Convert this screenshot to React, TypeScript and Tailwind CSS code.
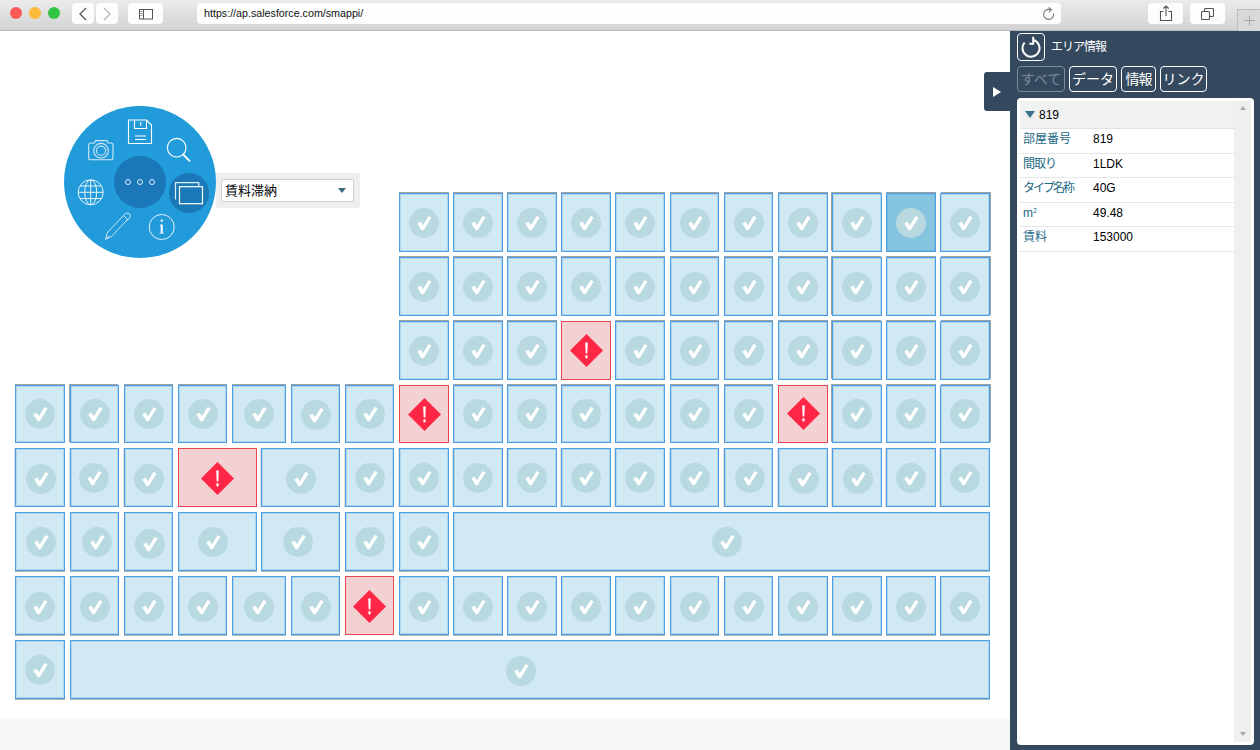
import React from "react";

const CJK = "font-['Liberation_Sans','Noto_Sans_CJK_JP',sans-serif]";

function Check() {
  return (
    <svg width="30" height="30" viewBox="0 0 30 30">
      <circle cx="15" cy="15" r="15" fill="#b9d9e0" />
      <path d="M8.3 15.6 L11.4 13.6 L13.9 17.2 L19.6 7.9 L22.6 9.6 L14.6 22.3 L12.6 22.3 Z" fill="#fff" />
    </svg>
  );
}

function Warn() {
  return (
    <svg width="33" height="33" viewBox="0 0 33 33">
      <path d="M16.5 0 L33 16.5 L16.5 33 L0 16.5 Z" fill="#ff2745" />
      <path d="M15.2 8.5 H17.8 L17.3 19.5 H15.7 Z" fill="#fff" />
      <rect x="15.4" y="21.3" width="2.2" height="3" fill="#fff" />
    </svg>
  );
}

type Cell = { r: number; c: number; s?: number; w?: boolean };

const run = (r: number, from: number, warn: number[] = []): Cell[] => {
  const out: Cell[] = [];
  for (let c = from; c <= 19; c++) out.push({ r, c, w: warn.includes(c) });
  return out;
};

const cells: Cell[] = [
  ...run(1, 9),
  ...run(2, 9),
  ...run(3, 9, [12]),
  { r: 4, c: 1 }, { r: 4, c: 2 }, { r: 4, c: 3 }, { r: 4, c: 4 }, { r: 4, c: 5, s: 2 }, { r: 4, c: 7 }, { r: 4, c: 8 },
  ...run(4, 9, [9, 16]),
  { r: 5, c: 1 }, { r: 5, c: 2 }, { r: 5, c: 3 }, { r: 5, c: 4, s: 2, w: true }, { r: 5, c: 6, s: 2 }, { r: 5, c: 8 },
  ...run(5, 9),
  { r: 6, c: 1 }, { r: 6, c: 2 }, { r: 6, c: 3 }, { r: 6, c: 4, s: 2 }, { r: 6, c: 6, s: 2 }, { r: 6, c: 8 }, { r: 6, c: 9 }, { r: 6, c: 10, s: 10 },
  { r: 7, c: 1 }, { r: 7, c: 2 }, { r: 7, c: 3 }, { r: 7, c: 4 }, { r: 7, c: 5, s: 2 }, { r: 7, c: 7 }, { r: 7, c: 8, w: true },
  ...run(7, 9),
  { r: 8, c: 1 }, { r: 8, c: 2, s: 18 },
];

// Tracks whose cell stops one pixel short of the column edge.
const LOOSE = [1, 2, 3, 4, 6, 7, 8, 13, 14, 15];

const NUDGE: Record<string, string> = {
  "4-7": "translate-y-px",
  "4-16": "-translate-y-px",
  "5-1": "translate-x-px translate-y-px",
  "5-2": "-translate-x-px",
  "5-3": "translate-y-px",
  "5-4": "translate-y-px",
  "5-6": "translate-y-px",
  "5-15": "translate-x-px",
  "5-16": "translate-x-px translate-y-px",
  "5-17": "translate-x-px translate-y-px",
  "6-1": "translate-x-px",
  "6-2": "translate-x-[2px]",
  "6-3": "translate-x-px translate-y-[2px]",
  "6-4": "-translate-x-[5px]",
  "6-6": "-translate-x-[3px]",
  "6-10": "translate-x-[5px]",
  "8-2": "-translate-x-[9px] translate-y-px",
};

function edge(cell: Cell): string {
  const last = cell.c + (cell.s ?? 1) - 1;
  if (cell.r <= 4) {
    if (cell.c === 17 || cell.c === 2) return "shadow-[-1px_-1px_0_#a0a0a0,inset_0_0_0_1px_rgba(74,156,224,0.25)]";
    if (last === 19) return "shadow-[1px_-1px_0_#a0a0a0,inset_0_0_0_1px_rgba(74,156,224,0.25)]";
    return "shadow-[0_-1px_0_#a0a0a0,inset_0_0_0_1px_rgba(74,156,224,0.25)]";
  }
  if (cell.r === 5) return "shadow-[-1px_0_0_#e0e0e0,inset_0_0_0_1px_rgba(74,156,224,0.25)]";
  return "shadow-[0_1px_0_#b5b5b5,inset_0_0_0_1px_rgba(74,156,224,0.25)]";
}

function Grid() {
  return (
    <div className="grid grid-cols-[51px_50px_50px_50px_25px_26px_50px_50px_50px_50px_50px_50px_51px_50px_50px_50px_50px_50px_50px] grid-rows-[59px_59px_59px_58px_59px_59px_59px_59px] gap-x-[4px] gap-y-[5px] w-[975px]">
      {cells.map((cell) => {
        const last = cell.c + (cell.s ?? 1) - 1;
        const hi = cell.r === 1 && cell.c === 18;
        const base = cell.w
          ? "bg-[#f3d0d2] border-[#e8484f]"
          : hi
            ? "bg-[#86c5e0] border-[#4a9fe6]"
            : "bg-[#d0e9f3] border-[#4a9fe6]";
        const key = `${cell.r}-${cell.c}`;
        const nudge = NUDGE[key] ?? (cell.r === 7 ? "translate-y-px" : "");
        return (
          <div
            key={key}
            style={{ gridRow: cell.r, gridColumn: `${cell.c} / span ${cell.s ?? 1}` }}
            className={`flex items-center justify-center border ${base} ${cell.w ? "" : edge(cell)} ${LOOSE.includes(last) ? "mr-px" : ""}`}
          >
            <div className={nudge}>{cell.w ? <Warn /> : <Check />}</div>
          </div>
        );
      })}
    </div>
  );
}

function Menu() {
  const s = { fill: "none", stroke: "#fff", strokeWidth: 1.2 };
  return (
    <div className="absolute left-[64px] top-[75px] flex items-center">
      <div className="relative w-[152px] h-[152px] rounded-full bg-[#229bda]">
        <div className="absolute left-[50px] top-[50px] w-[52px] h-[52px] rounded-full bg-[#1b78b8] flex items-center justify-center gap-[6px]">
          <span className="w-[6px] h-[6px] rounded-full border border-[#dcecf6]" />
          <span className="w-[6px] h-[6px] rounded-full border border-[#dcecf6]" />
          <span className="w-[6px] h-[6px] rounded-full border border-[#dcecf6]" />
        </div>
        <div className="absolute left-[105px] top-[67px] w-[40px] h-[40px] rounded-full bg-[#1b78b8]" />
        <svg className="absolute inset-0" width="152" height="152" viewBox="0 0 152 152">
          {/* floppy */}
          <g {...s} strokeWidth={1.1}>
            <path d="M64.5 14 H82.5 L87.5 19 V37.5 H64.5 Z" />
            <path d="M70.5 14 V22.5 H82.5 V14" />
            <path d="M76.7 16 V19.7" />
            <path d="M71 30 H82 M71 33.5 H82" />
          </g>
          {/* search */}
          <g {...s} strokeWidth={1.1}>
            <circle cx="112.7" cy="41.7" r="9.3" />
            <path d="M118.7 48 L126 55.3" strokeWidth={1.8} />
          </g>
          {/* camera */}
          <g {...s} stroke="#cfe7f5" strokeWidth={1.1}>
            <path d="M24.7 39 Q24.7 37 27 37 H30.5 L31.5 34.6 H43 L44 37 H47 Q49 37 49 39 V52 Q49 53.8 47 53.8 H27 Q24.7 53.8 24.7 52 Z" />
            <circle cx="37" cy="44.7" r="7.3" />
            <circle cx="37" cy="44.7" r="4.6" />
          </g>
          {/* globe */}
          <g {...s} stroke="#e6f3fa" strokeWidth={1}>
            <circle cx="26.7" cy="86.3" r="12.5" />
            <ellipse cx="26.7" cy="86.3" rx="6" ry="12.5" />
            <path d="M26.7 73.8 V98.8 M14.2 86.3 H39.2 M16 80 H37.4 M16 92.6 H37.4" />
          </g>
          {/* pencil */}
          <g {...s} stroke="#dcecf6" strokeWidth={0.9}>
            <path d="M41.7 133.3 L43 127 L59.5 109.5 L63.5 113.5 L47.5 130.5 Z" />
            <path d="M57.5 111.5 L61.5 107.5 Q63 106.5 65 107.5 L66 109 Q66.7 110.5 65.5 112 L62 115.5" />
            <path d="M41.7 133.3 L45.5 129.5" />
          </g>
          {/* info */}
          <circle cx="97.7" cy="121" r="12.5" {...s} stroke="#e6f3fa" strokeWidth={1} />
          <path d="M96.8 113.5h1.9v2.2h-1.9z M96 118.6h2.7v8.2h1.1v0.8h-4.2v-0.8h1.1v-7.4h-0.7z" fill="#fff" />
          {/* windows */}
          <g {...s} strokeWidth={1.2}>
            <path d="M111.5 93.5 V76.7 H134.8 V80.7" stroke="#dcecf6" />
            <rect x="115.5" y="80.7" width="23" height="17" fill="#1b78b8" />
          </g>
        </svg>
      </div>
      <div className="mt-[17px] w-[144px] h-[35px] bg-[#eeeeee] rounded-r-[2px] flex items-center pl-[5px]">
        <div className={`w-[133px] h-[23px] bg-white border border-[#ccd0d2] rounded-[2px] flex items-center justify-between pl-[3px] pr-[7px] ${CJK} text-[13px] text-black`}>
          <span>賃料滞納</span>
          <span className="w-0 h-0 border-l-[4.5px] border-r-[4.5px] border-t-[5px] border-l-transparent border-r-transparent border-t-[#3a6680]" />
        </div>
      </div>
    </div>
  );
}

function Chrome() {
  const btn = "bg-[#fdfdfd] rounded-[4px] flex items-center";
  return (
    <div className="h-[31px] flex items-start bg-gradient-to-b from-[#ebebeb] to-[#d3d3d3] border-b border-[#b9b9b9] relative">
      <div className="flex items-center gap-[7px] ml-[10px] mt-[7px]">
        <span className="w-[12px] h-[12px] rounded-full bg-[#fc5b57]" />
        <span className="w-[12px] h-[12px] rounded-full bg-[#fdb93a]" />
        <span className="w-[12px] h-[12px] rounded-full bg-[#30c544]" />
      </div>
      <div className="flex gap-[2px] ml-[12px] mt-[3px]">
        <div className={`${btn} justify-center w-[22px] h-[21px]`}>
          <svg width="12" height="14" viewBox="0 0 12 14"><path d="M9 1 L3 7 L9 13" fill="none" stroke="#555" strokeWidth="1.3" /></svg>
        </div>
        <div className={`${btn} justify-center w-[22px] h-[21px]`}>
          <svg width="12" height="14" viewBox="0 0 12 14"><path d="M3 1 L9 7 L3 13" fill="none" stroke="#b5b5b5" strokeWidth="1.3" /></svg>
        </div>
      </div>
      <div className={`${btn} justify-center w-[35px] h-[21px] ml-[10px] mt-[3px]`}>
        <svg width="14" height="12" viewBox="0 0 14 12">
          <rect x="0.5" y="1.5" width="13" height="9.5" fill="none" stroke="#555" />
          <path d="M4.5 1.5 V11" stroke="#555" />
          <path d="M1.5 3.5H3.5M1.5 5.5H3.5M1.5 7.5H3.5" stroke="#888" />
        </svg>
      </div>
      <div className={`${btn} justify-between w-[864px] h-[21px] ml-[34px] mt-[3px] pl-[7px] pr-[5px] font-['Liberation_Sans',sans-serif] text-[10.7px] text-[#111]`}>
        <span>https://ap.salesforce.com/smappi/</span>
        <svg width="14" height="14" viewBox="0 0 14 14" fill="none" stroke="#777" strokeWidth="1.1">
          <path d="M11.5 6.5 A5 5 0 1 1 8 2.6" />
          <path d="M6.6 0.5 L9.6 2.8 L6.8 5.2" />
        </svg>
      </div>
      <div className={`${btn} justify-center w-[35px] h-[21px] ml-[87px] mt-[3px]`}>
        <svg width="14" height="17" viewBox="0 0 14 17" fill="none" stroke="#555" strokeWidth="1.1">
          <path d="M4.5 6.5H1.5V15.5H12.5V6.5H9.5" />
          <path d="M7 11V1M4.3 3.5L7 1L9.7 3.5" />
        </svg>
      </div>
      <div className={`${btn} justify-center w-[35px] h-[21px] ml-[7px] mt-[3px]`}>
        <svg width="13" height="12" viewBox="0 0 13 12" fill="none" stroke="#555" strokeWidth="1.1">
          <rect x="0.5" y="3.5" width="8" height="8" rx="1" />
          <path d="M3.5 3V1.5Q3.5 0.5 4.5 0.5H11.5Q12.5 0.5 12.5 1.5V7.5Q12.5 8.5 11.5 8.5H9" />
        </svg>
      </div>
      <div className="absolute right-0 top-[9px] w-[23px] h-[22px] border-l border-t border-[#bdbdbd] bg-[#d9d9d9] flex items-center justify-center">
        <svg width="11" height="11" viewBox="0 0 11 11"><path d="M5.5 0.5V10.5M0.5 5.5H10.5" stroke="#a5a5a5" /></svg>
      </div>
    </div>
  );
}

function Tab({ children, off = false, w }: { children: React.ReactNode; off?: boolean; w: string }) {
  return (
    <div className={`${w} h-[26px] rounded-[4px] border flex items-center justify-center text-[14px] ${off ? "border-[#7d8b99] text-[#7d8b99]" : "border-white text-white"}`}>
      {children}
    </div>
  );
}

const rows: [React.ReactNode, string][] = [
  ["部屋番号", "819"],
  [<span key="a" className="tracking-[-1px]">間取り</span>, "1LDK"],
  [<span key="b" className="tracking-[-2px]">タイプ名称</span>, "40G"],
  [<span key="m">m<sup className="text-[7px]">2</sup></span>, "49.48"],
  ["賃料", "153000"],
];

function Panel() {
  return (
    <div className={`relative w-[250px] shrink-0 bg-[#34495e] flex flex-col ${CJK}`}>
      <div className="absolute left-[-26px] top-[41px] w-[26px] h-[39px] bg-[#34495e] rounded-l-[3px] flex items-center justify-center">
        <span className="w-0 h-0 border-t-[5.5px] border-b-[5.5px] border-l-[8px] border-t-transparent border-b-transparent border-l-white" />
      </div>
      <div className="flex items-center h-[28px] ml-[7px] mt-[2px] gap-[6px]">
        <div className="w-[28px] h-[28px] rounded-[4px] border border-white flex items-center justify-center">
          <svg width="22" height="22" viewBox="0 0 22 22" fill="none" stroke="#fff" strokeWidth="2">
            <path d="M4.6 6.6 A8.5 8.5 0 1 0 13.4 4" />
            <path d="M13.2 0.8 V7.8 H9.4" strokeWidth="1.9" />
          </svg>
        </div>
        <span className="text-white text-[12px] tracking-[-1px]">エリア情報</span>
      </div>
      <div className="flex gap-[4px] ml-[7px] mt-[5px]">
        <Tab off w="w-[48px]">すべて</Tab>
        <Tab w="w-[48px]">データ</Tab>
        <Tab w="w-[35px]"><span className="tracking-[-1px]">情報</span></Tab>
        <Tab w="w-[47px]">リンク</Tab>
      </div>
      <div className="ml-[7px] mr-[6px] mt-[6px] flex-1 mb-[5px] bg-white rounded-[4px] p-[3px] flex">
        <div className="flex-1 text-[12px]">
          <div className="h-[28px] bg-[#f0f2f2] border-b border-[#dfe3e3] flex items-center pl-[5px] gap-[4px] text-black">
            <span className="w-0 h-0 border-l-[5px] border-r-[5px] border-t-[7px] border-l-transparent border-r-transparent border-t-[#3a7290]" />
            <span>819</span>
          </div>
          {rows.map(([k, v], i) => (
            <div key={i} className="h-[24.5px] border-b border-[#e4e7e7] flex items-center pl-[3px] pb-[3px]">
              <span className="w-[70px] text-[#1d6a85]">{k}</span>
              <span className="text-black">{v}</span>
            </div>
          ))}
        </div>
        <div className="w-[17px] bg-[#efefef] flex flex-col items-center justify-between pt-[5px] pb-[6px]">
          <span className="w-0 h-0 border-l-[3.5px] border-r-[3.5px] border-b-[4px] border-l-transparent border-r-transparent border-b-[#a9a9a9]" />
          <span className="w-0 h-0 border-l-[3.5px] border-r-[3.5px] border-t-[4px] border-l-transparent border-r-transparent border-t-[#a9a9a9]" />
        </div>
      </div>
    </div>
  );
}

export default function App() {
  return (
    <div className="w-[1260px] h-[750px] flex flex-col overflow-hidden bg-white">
      <Chrome />
      <div className="flex flex-1 min-h-0">
        <div className="flex-1 flex flex-col relative">
          <div className="flex-1 pl-[15px] pt-[162px]">
            <Grid />
          </div>
          <div className="h-[32px] bg-[#f7f7f7]" />
          <Menu />
        </div>
        <Panel />
      </div>
    </div>
  );
}
